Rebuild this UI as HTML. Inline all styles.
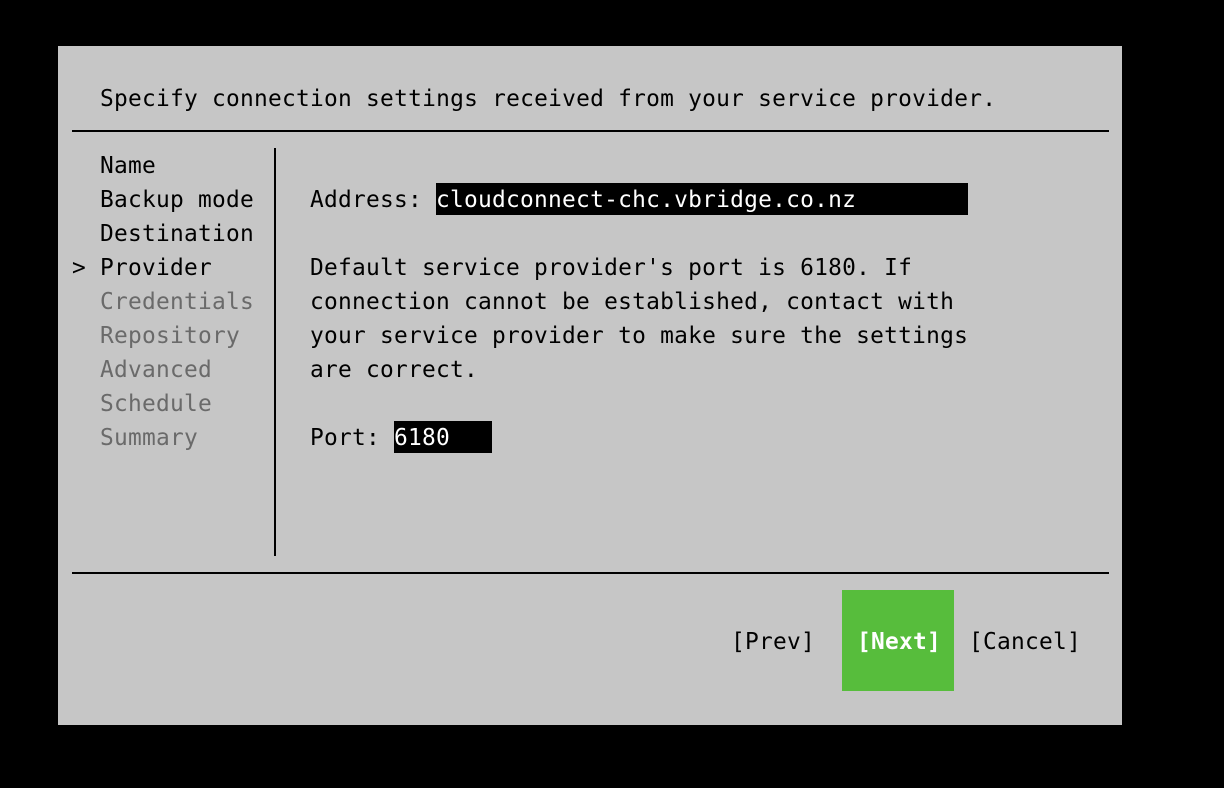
<!DOCTYPE html>
<html><head><style>
body{margin:0;background:#000;width:1224px;height:788px;overflow:hidden;position:relative;font-family:"DejaVu Sans Mono","Liberation Mono",monospace;font-size:22.85px;letter-spacing:0.25px;color:#000}
.p{position:absolute;left:58px;top:46px;width:1064px;height:679px;background:#c6c6c6}
.t{position:absolute;white-space:pre;line-height:34px;height:34px}
.g{color:#6a6a6a}
.h{position:absolute;background:#000}
</style></head><body>
<div class="p"></div>
<div class="t" style="left:100px;top:82px">Specify connection settings received from your service provider.</div>
<div class="h" style="left:72px;top:130px;width:1037px;height:2px"></div>
<div class="h" style="left:274px;top:148px;width:2px;height:408px"></div>
<div class="h" style="left:72px;top:572px;width:1037px;height:2px"></div>
<div class="t" style="left:100px;top:149px">Name</div>
<div class="t" style="left:100px;top:183px">Backup mode</div>
<div class="t" style="left:100px;top:217px">Destination</div>
<div class="t" style="left:72px;top:251px">> Provider</div>
<div class="t g" style="left:100px;top:285px">Credentials</div>
<div class="t g" style="left:100px;top:319px">Repository</div>
<div class="t g" style="left:100px;top:353px">Advanced</div>
<div class="t g" style="left:100px;top:387px">Schedule</div>
<div class="t g" style="left:100px;top:421px">Summary</div>
<div class="h" style="left:436px;top:183px;width:532px;height:32px"></div>
<div class="t" style="left:310px;top:183px">Address: <span style="color:#fff">cloudconnect-chc.vbridge.co.nz</span></div>
<div class="t" style="left:310px;top:251px">Default service provider's port is 6180. If</div>
<div class="t" style="left:310px;top:285px">connection cannot be established, contact with</div>
<div class="t" style="left:310px;top:319px">your service provider to make sure the settings</div>
<div class="t" style="left:310px;top:353px">are correct.</div>
<div class="h" style="left:394px;top:421px;width:98px;height:32px"></div>
<div class="t" style="left:310px;top:421px">Port: <span style="color:#fff">6180</span></div>
<div class="h" style="left:842px;top:590px;width:112px;height:101px;background:#57bd3c"></div>
<div class="t" style="left:731px;top:625px">[Prev]</div>
<div class="t" style="left:857px;top:625px;color:#fff;font-weight:bold">[Next]</div>
<div class="t" style="left:969px;top:625px">[Cancel]</div>
</body></html>
